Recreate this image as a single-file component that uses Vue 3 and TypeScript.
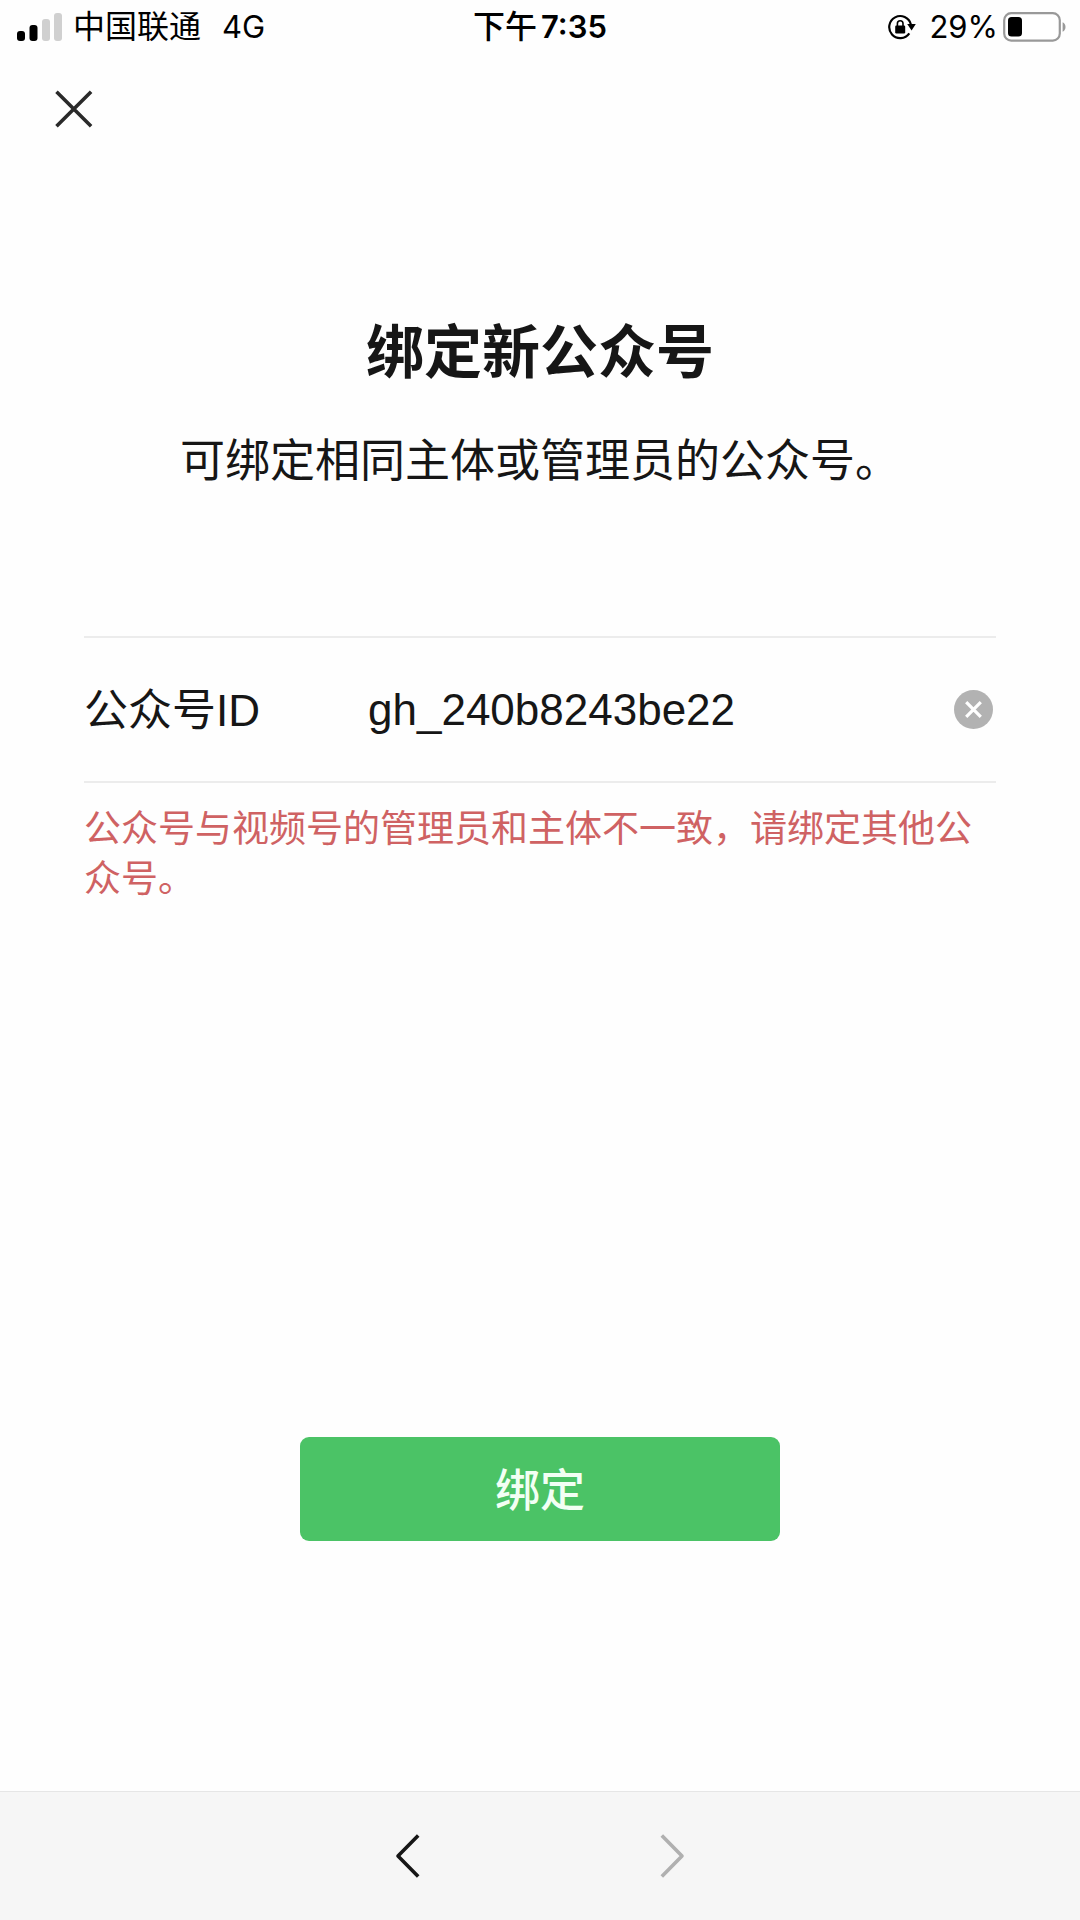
<script setup lang="ts">
import { ref } from 'vue'

const accountId = ref<string>('gh_240b8243be22')
const errorText = ref<string>('公众号与视频号的管理员和主体不一致，请绑定其他公众号。')

function clearId(): void {
  accountId.value = ''
  errorText.value = ''
}
</script>

<template>
  <div class="page">
    <header class="status">
      <div class="status-left">
        <svg class="signal" width="46" height="28" viewBox="0 0 46 28" aria-hidden="true">
          <rect x="0" y="18" width="8" height="10" rx="3" fill="#000" />
          <rect x="12.5" y="12" width="8" height="16" rx="3" fill="#000" />
          <rect x="25" y="6" width="8" height="22" rx="3" fill="#d0d0d0" />
          <rect x="37" y="0" width="8" height="28" rx="3" fill="#d0d0d0" />
        </svg>
        <span class="carrier">中国联通</span>
        <span>4G</span>
      </div>
      <div class="time"><span class="period">下午</span><span>7:35</span></div>
      <div class="status-right">
        <svg class="lock" width="28" height="26" viewBox="0 0 28 26" aria-hidden="true">
          <path d="M22.9 10.4A11 11 0 1 0 21.3 19.3" fill="none" stroke="#000" stroke-width="2.2" />
          <path d="M19.2 10h8.6l-4.2 6.4z" fill="#000" />
          <rect x="7.2" y="11.6" width="10" height="7.8" rx="1.2" fill="#000" />
          <path d="M9.4 12V9.6a2.8 2.8 0 0 1 5.6 0V12" fill="none" stroke="#000" stroke-width="1.6" />
        </svg>
        <span>29%</span>
        <svg class="battery" width="64" height="30" viewBox="0 0 64 30" aria-hidden="true">
          <rect x="1.2" y="1.2" width="55.6" height="27.4" rx="7" fill="#fff" stroke="#999" stroke-width="2.2" />
          <rect x="5" y="5" width="14" height="19.6" rx="3.6" fill="#000" />
          <path d="M59.6 10.2a5.4 5.4 0 0 1 0 9.6z" fill="#999" />
        </svg>
      </div>
    </header>

    <nav class="top">
      <button class="icon-button" type="button" aria-label="关闭">
        <svg width="56" height="56" viewBox="0 0 56 56">
          <path d="M11.5 10.7l34.6 34.6M46.1 10.7L11.5 45.3" fill="none" stroke="#2a2a2a" stroke-width="3.6" />
        </svg>
      </button>
    </nav>

    <main class="content">
      <h1>绑定新公众号</h1>
      <p class="subtitle">可绑定相同主体或管理员的公众号。</p>

      <form class="form" @submit.prevent>
        <div class="field">
          <label for="account-id">公众号ID</label>
          <input id="account-id" v-model="accountId" type="text" autocomplete="off" spellcheck="false" />
          <button class="clear" type="button" aria-label="清除" @click="clearId">
            <svg width="39" height="39" viewBox="0 0 39 39">
              <circle cx="19.5" cy="19.5" r="19.5" fill="#b2b2b2" />
              <path d="M12.2 12.2l14.6 14.6M26.8 12.2L12.2 26.8" fill="none" stroke="#fff" stroke-width="3.2" />
            </svg>
          </button>
        </div>
        <p class="error" role="alert">{{ errorText }}</p>
        <button class="submit" type="submit">绑定</button>
      </form>
    </main>

    <footer class="toolbar">
      <button class="icon-button" type="button" aria-label="后退">
        <svg width="56" height="56" viewBox="0 0 56 56">
          <path d="M38.2 7.5L18 28l20.2 20.5" fill="none" stroke="#161616" stroke-width="3.6" stroke-linejoin="round" />
        </svg>
      </button>
      <button class="icon-button" type="button" aria-label="前进" disabled>
        <svg width="56" height="56" viewBox="0 0 56 56">
          <path d="M17.8 7.5L38 28 17.8 48.5" fill="none" stroke="#b0b0b0" stroke-width="3.6" stroke-linejoin="round" />
        </svg>
      </button>
    </footer>
  </div>
</template>

<style>
body {
  margin: 0;
  background: #fefefe;
}
</style>

<style scoped>
.page {
  display: flex;
  flex-direction: column;
  min-height: 100vh;
  color: #161616;
  font-family: "Liberation Sans", "Noto Sans CJK SC", sans-serif;
}

button {
  padding: 0;
  border: 0;
  background: none;
  font-family: inherit;
  cursor: pointer;
}

svg {
  display: block;
}

.status {
  display: grid;
  grid-template-columns: 1fr auto 1fr;
  align-items: center;
  height: 54px;
  padding: 0 13px;
  color: #000;
  font-family: Inter, "Noto Sans CJK SC", sans-serif;
  font-size: 31px;
  line-height: 54px;
}

.status-left,
.status-right,
.time {
  display: flex;
  align-items: center;
}

.signal {
  margin-left: 4px;
}

.carrier {
  margin: 0 21px 0 10px;
  font-size: 32px;
}

.time {
  gap: 4px;
  font-weight: 600;
}

.period {
  font-size: 32px;
  font-weight: 500;
}

.status-right {
  justify-content: flex-end;
}

.lock {
  margin-right: 13px;
}

.battery {
  margin-left: 5px;
}

.top {
  display: flex;
  align-items: center;
  height: 110px;
  padding: 0 45px;
}

.content {
  display: flex;
  flex: 1;
  flex-direction: column;
  padding: 149px 84px 250px;
}

h1 {
  margin: 0;
  font-size: 58px;
  font-weight: 700;
  line-height: 80px;
  text-align: center;
}

.subtitle {
  margin: 37px 0 0;
  font-size: 45px;
  line-height: 64px;
  text-align: center;
}

.form {
  display: flex;
  flex: 1;
  flex-direction: column;
  margin-top: 142px;
}

.field {
  display: flex;
  align-items: center;
  height: 143px;
  padding-right: 3px;
  border-top: 2px solid #ececec;
  border-bottom: 2px solid #ececec;
  font-size: 44px;
}

.field label {
  flex: none;
  width: 284px;
  padding-bottom: 5px;
}

.field input {
  flex: 1;
  min-width: 0;
  padding: 0;
  border: 0;
  outline: 0;
  background: none;
  color: inherit;
  font: inherit;
}

.error {
  margin: 22px 0 0;
  color: #cf6263;
  font-size: 37px;
  line-height: 50px;
}

.submit {
  align-self: center;
  width: 480px;
  height: 104px;
  margin-top: auto;
  padding-bottom: 3px;
  border-radius: 9px;
  background: #4bc366;
  color: #f2fff4;
  font-size: 45px;
  font-weight: 500;
}

.toolbar {
  display: flex;
  align-items: center;
  justify-content: center;
  gap: 208px;
  height: 128px;
  border-top: 1px solid #e6e6e6;
  background: #f6f6f6;
}
</style>
